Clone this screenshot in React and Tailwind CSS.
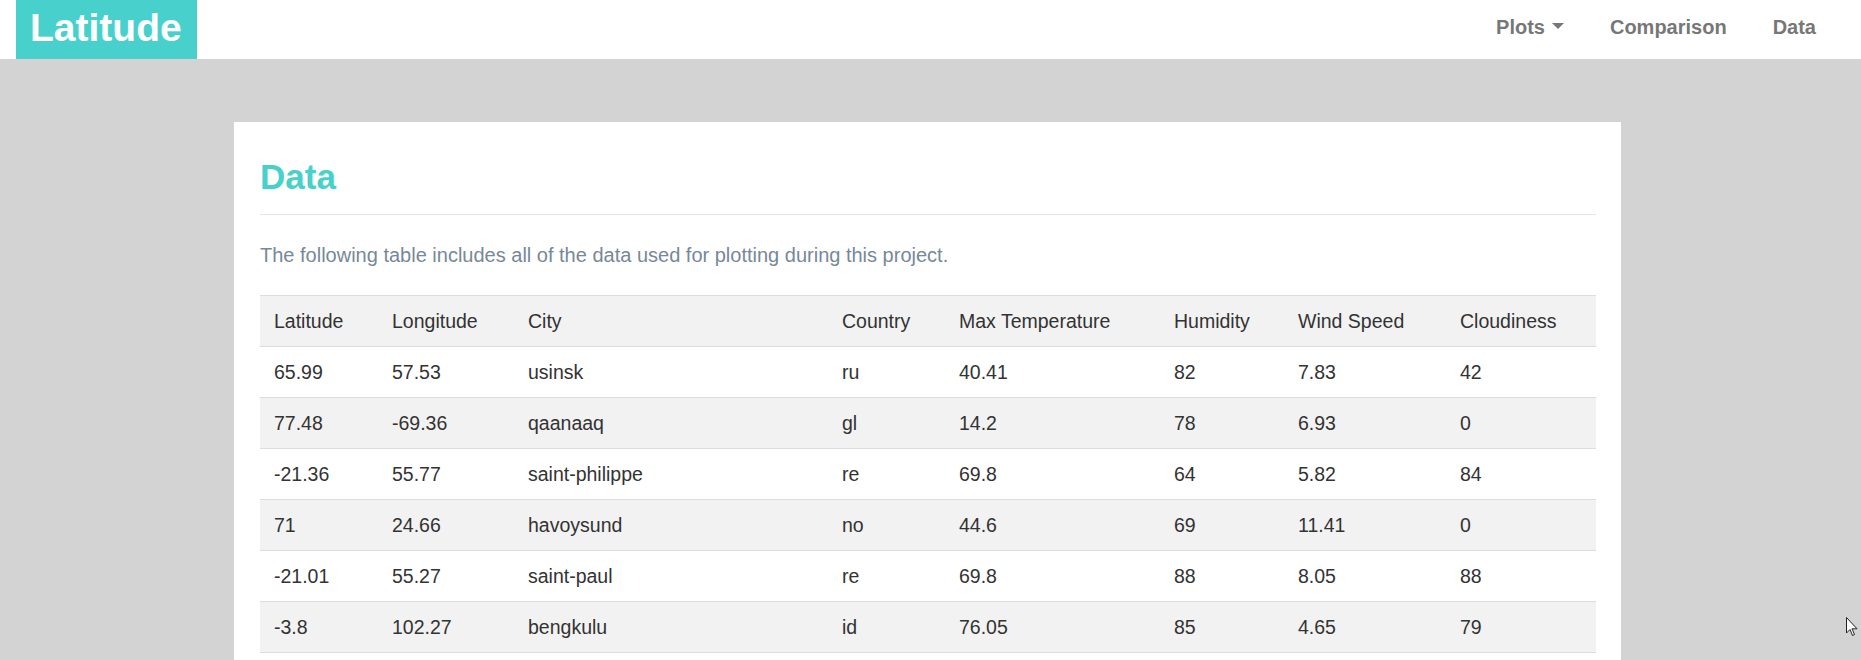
import React from 'react';

const columns = [
  { label: 'Latitude', width: 'w-[118px]' },
  { label: 'Longitude', width: 'w-[136px]' },
  { label: 'City', width: 'w-[314px]' },
  { label: 'Country', width: 'w-[117px]' },
  { label: 'Max Temperature', width: 'w-[215px]' },
  { label: 'Humidity', width: 'w-[124px]' },
  { label: 'Wind Speed', width: 'w-[162px]' },
  { label: 'Cloudiness', width: 'w-[150px]' },
];

const rows = [
  ['65.99', '57.53', 'usinsk', 'ru', '40.41', '82', '7.83', '42'],
  ['77.48', '-69.36', 'qaanaaq', 'gl', '14.2', '78', '6.93', '0'],
  ['-21.36', '55.77', 'saint-philippe', 're', '69.8', '64', '5.82', '84'],
  ['71', '24.66', 'havoysund', 'no', '44.6', '69', '11.41', '0'],
  ['-21.01', '55.27', 'saint-paul', 're', '69.8', '88', '8.05', '88'],
  ['-3.8', '102.27', 'bengkulu', 'id', '76.05', '85', '4.65', '79'],
];

const Navbar = () => (
  <nav className="flex h-[59px] items-start justify-between bg-white">
    <a className="ml-[16px] h-[59px] w-[181px] bg-[#48d1cc] pl-[14px] text-[39px] font-bold leading-[56px] text-white">
      Latitude
    </a>
    <ul className="flex pr-[22px] pt-[17px] text-[20px] font-bold leading-[20px] text-[#777]">
      <li className="flex items-center px-[23px]">
        Plots
        <span className="ml-[7px] mb-[2px] inline-block h-0 w-0 border-x-[6px] border-t-[6px] border-x-transparent border-t-[#777]"></span>
      </li>
      <li className="px-[23px]">Comparison</li>
      <li className="px-[23px]">Data</li>
    </ul>
  </nav>
);

const App = () => {
  return (
    <div className="relative min-h-screen bg-[#d3d3d3] font-['Liberation_Sans',Arial,sans-serif]">
      <Navbar />

      {/* Main content */}
      <div className="pl-[234px] pt-[63px]">
        <div className="w-[1387px] bg-white pb-[40px] pl-[26px] pr-[25px] pt-[36px]">
          <h1 className="text-[35px] font-bold leading-[38px] text-[#48d1cc]">Data</h1>
          <hr className="mt-[18px] border-t border-[#e5e5e5]" />
          <p className="mt-[27px] text-[20px] leading-[26px] text-[#778899]">
            The following table includes all of the data used for plotting during this project.
          </p>

          <table className="mt-[27px] w-full table-fixed border-collapse text-left text-[19.5px] leading-[22px] text-[#333]">
            <thead>
              <tr className="border-y border-[#ddd] bg-[#f2f2f2]">
                {columns.map((col) => (
                  <th key={col.label} className={`${col.width} pb-[14px] pl-[14px] pt-[14px] font-normal`}>
                    {col.label}
                  </th>
                ))}
              </tr>
            </thead>
            <tbody>
              {rows.map((row, i) => (
                <tr key={i} className={`border-b border-[#ddd] ${i % 2 === 1 ? 'bg-[#f2f2f2]' : 'bg-white'}`}>
                  {row.map((cell, j) => (
                    <td key={j} className="pb-[14px] pl-[14px] pt-[14px]">
                      {cell}
                    </td>
                  ))}
                </tr>
              ))}
            </tbody>
          </table>
        </div>
      </div>

      {/* mouse pointer */}
      <svg className="absolute left-[1846px] top-[617px]" width="12" height="20" viewBox="0 0 12 20">
        <path d="M0.5 0.5 L0.5 16 L4 12.5 L6.5 18.5 L8.5 17.5 L6 11.8 L11 11.8 Z" fill="white" stroke="#222" strokeWidth="1" />
      </svg>
    </div>
  );
};

export default App;
